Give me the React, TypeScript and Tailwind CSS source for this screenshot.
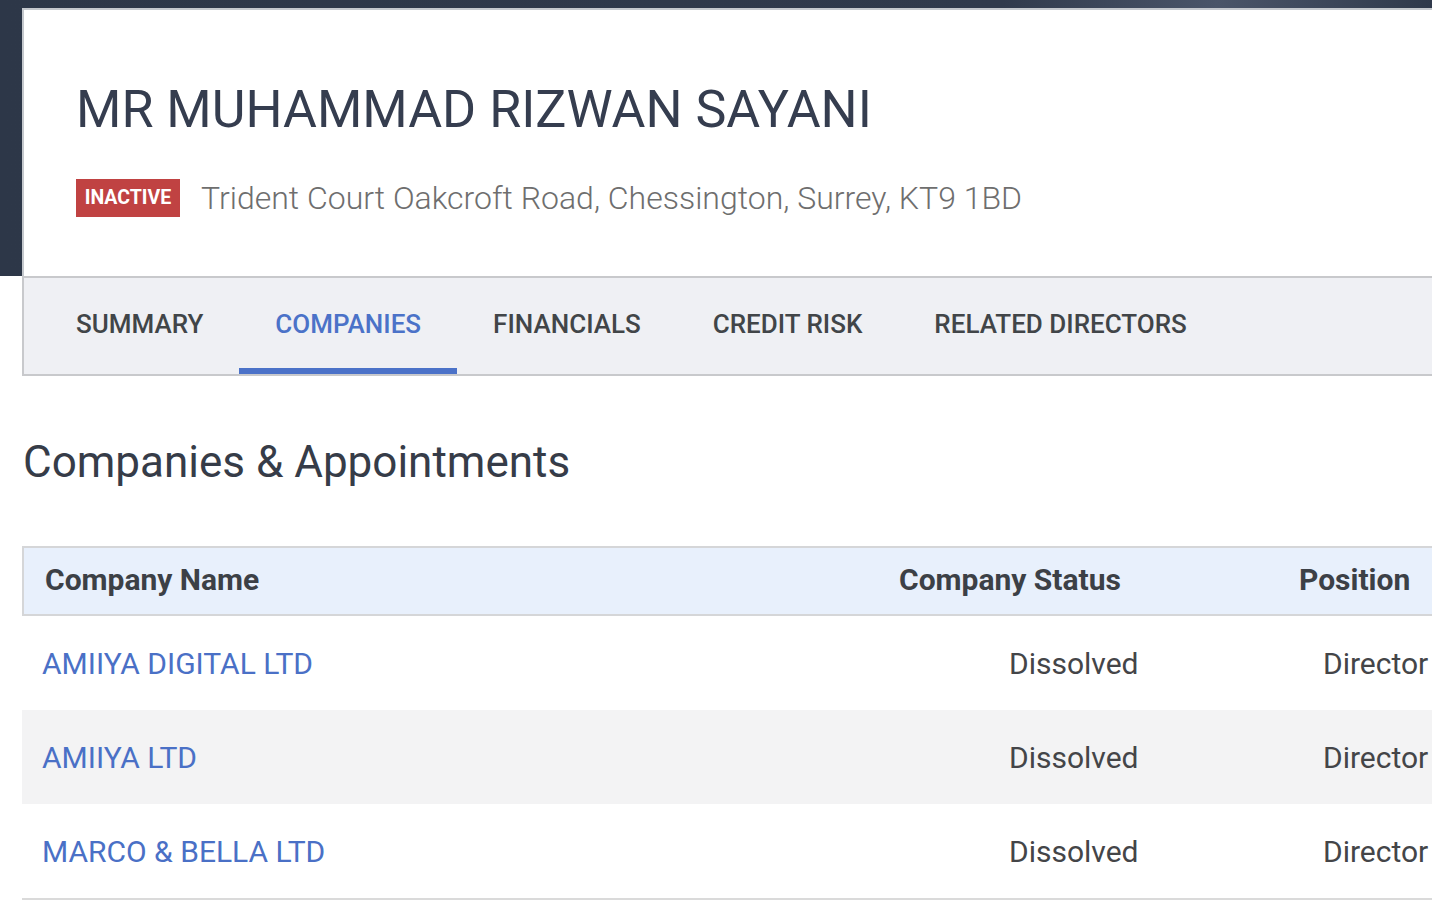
import React from 'react';

const rows = [
  { name: 'AMIIYA DIGITAL LTD', status: 'Dissolved', position: 'Director' },
  { name: 'AMIIYA LTD', status: 'Dissolved', position: 'Director' },
  { name: 'MARCO & BELLA LTD', status: 'Dissolved', position: 'Director' },
];

const tabs = ['SUMMARY', 'COMPANIES', 'FINANCIALS', 'CREDIT RISK', 'RELATED DIRECTORS'];

export default function App() {
  return (
    <div className="min-h-screen w-full overflow-hidden bg-white font-['Roboto',sans-serif]">
      {/* header card on dark backdrop */}
      <div className="bg-[linear-gradient(90deg,#2d3748_0%,#303a4c_70%,#4a5569_85%,#2f394b_100%)] pl-[22px] pt-[8px]">
        <div className="h-[268px] w-[1460px] border-l-2 border-t-2 border-[#c4c8cd] bg-white pl-[52px] pt-[70px]">
          <h1 className="text-[52px] leading-[60px] font-normal text-[#353d4f]">
            MR MUHAMMAD RIZWAN SAYANI
          </h1>
          <div className="mt-[39px] flex items-center gap-[21px]">
            <span className="flex h-[38px] w-[104px] items-center justify-center bg-[#c04242] text-[19.5px] font-bold text-white">
              INACTIVE
            </span>
            <span className="text-[32px] leading-[38px] font-light text-[#6e6e6e]">
              Trident Court Oakcroft Road, Chessington, Surrey, KT9 1BD
            </span>
          </div>
        </div>
      </div>

      {/* tabs */}
      <div className="ml-[22px] flex h-[100px] w-[1460px] border-2 border-r-0 border-[#c8c9cc] bg-[#eff0f4] pl-[16px]">
        {tabs.map((t) => (
          <div
            key={t}
            className={
              t === 'COMPANIES'
                ? 'flex items-center border-b-[6px] border-[#4b72c8] px-[36px] pt-[2px] text-[26px] font-medium text-[#4b72c8]'
                : 'flex items-center border-b-[6px] border-transparent px-[36px] pt-[2px] text-[26px] font-medium text-[#414548]'
            }
          >
            {t}
          </div>
        ))}
      </div>

      <h2 className="ml-[23px] mt-[58px] text-[44px] leading-[56px] font-normal text-[#363c48]">
        Companies &amp; Appointments
      </h2>

      {/* table */}
      <div className="ml-[22px] mt-[56px] w-[1460px] border-b-2 border-[#dadada]">
        <div className="grid h-[70px] grid-cols-[855px_400px_1fr] items-center border-2 border-r-0 border-[#d5d6d8] bg-[#e8f0fc] pb-[3px] text-[30px] font-bold text-[#3c4046]">
          <div className="pl-[21px]">Company Name</div>
          <div className="pl-[20px]">Company Status</div>
          <div className="pl-[20px]">Position</div>
        </div>
        {rows.map((r, i) => (
          <div
            key={r.name}
            className={
              i % 2 === 1
                ? 'grid h-[94px] grid-cols-[855px_400px_1fr] items-center bg-[#f3f3f4] text-[30px]'
                : 'grid h-[94px] grid-cols-[855px_400px_1fr] items-center bg-white text-[30px]'
            }
          >
            <div className="pl-[20px] text-[#4a70c6]">{r.name}</div>
            <div className="pl-[132px] text-[#444548]">{r.status}</div>
            <div className="pl-[46px] text-[#444548]">{r.position}</div>
          </div>
        ))}
      </div>
    </div>
  );
}
